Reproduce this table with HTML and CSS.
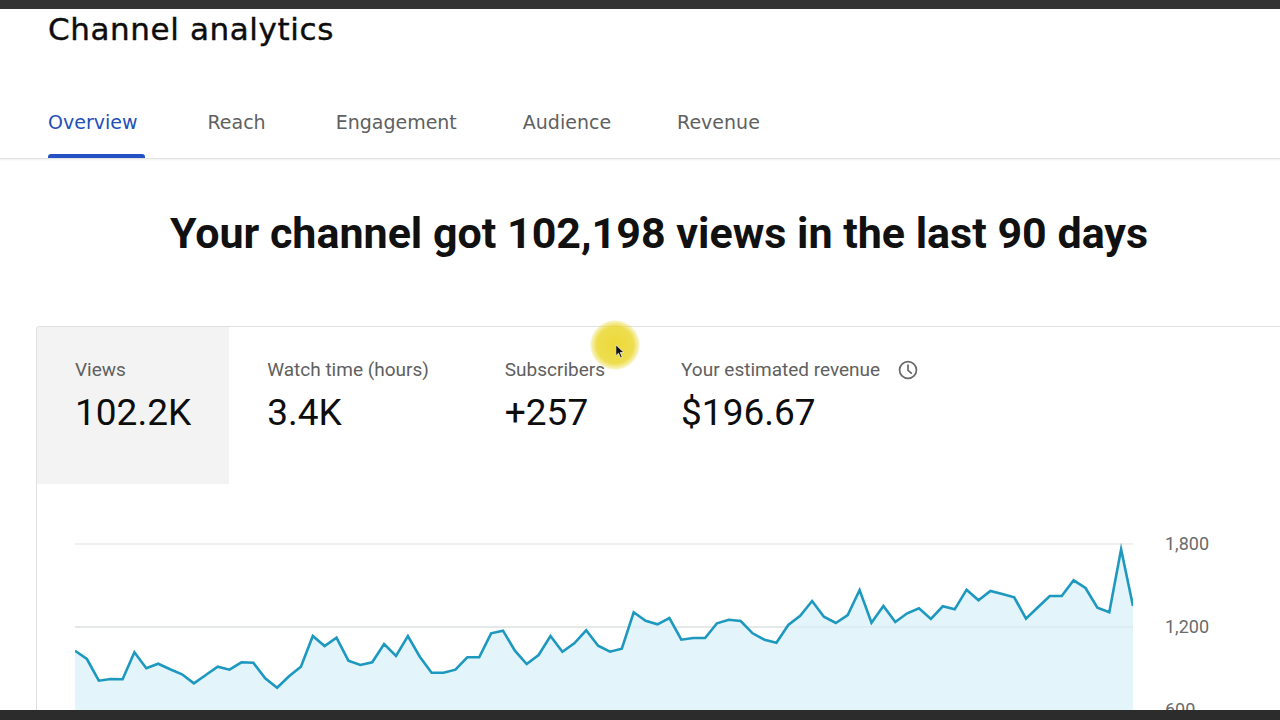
FILE: index.html
```html
<!DOCTYPE html>
<html lang="en">
<head>
<meta charset="utf-8">
<title>Channel analytics</title>
<link rel="stylesheet" href="styles.css">
</head>
<body>
<div class="topbar"></div>
<header class="header">
  <h1 class="title">Channel analytics</h1>
</header>
<nav class="tabs">
  <a class="tab active">Overview</a>
  <a class="tab">Reach</a>
  <a class="tab">Engagement</a>
  <a class="tab tight">Audience</a>
  <a class="tab tight">Revenue</a>
</nav>
<h2 class="headline">Your channel got 102,198 views in the last 90 days</h2>
<section class="card">
  <div class="metrics">
    <div class="metric selected">
      <div class="m-label">Views</div>
      <div class="m-value">102.2K</div>
    </div>
    <div class="metric">
      <div class="m-label">Watch time (hours)</div>
      <div class="m-value">3.4K</div>
    </div>
    <div class="metric">
      <div class="m-label">Subscribers</div>
      <div class="m-value">+257</div>
    </div>
    <div class="metric">
      <div class="m-label">Your estimated revenue
        <svg class="clock" viewBox="0 0 24 24" width="22" height="22" aria-hidden="true">
          <circle cx="12" cy="12" r="9.2" fill="none" stroke="#6a6a6a" stroke-width="1.9"/>
          <path d="M12 6.8V12.4L15.6 15.4" fill="none" stroke="#6a6a6a" stroke-width="1.9" stroke-linecap="round" stroke-linejoin="round"/>
        </svg>
      </div>
      <div class="m-value">$196.67</div>
    </div>
  </div>
  <div class="chart">
    <svg class="plot" width="1058" height="190" viewBox="75 530 1058 190" aria-hidden="true">
      <line x1="75" y1="544" x2="1133" y2="544" stroke="#e2e2e2" stroke-width="1.2"/>
      <line x1="75" y1="627" x2="1133" y2="627" stroke="#dcdcdc" stroke-width="1.2"/>
      <path fill="#e3f4fa" d="M75,720 L75,650.7 86.9,659 98.8,680.7 110.7,679 122.6,679.3 134.4,652.3 146.3,668.3 158.2,663.7 170.1,669.3 182,674.3 193.9,683.3 205.8,675 217.7,666.7 229.5,669.7 241.4,662.3 253.3,662.7 265.2,678.3 277.1,687.7 289,676.3 300.9,666.7 312.8,636 324.6,646 336.5,637.7 348.4,660.7 360.3,665 372.2,662.3 384.1,644 396,656 407.9,636 419.8,656.7 431.6,672.7 443.5,672.7 455.4,669.7 467.3,657.3 479.2,657.3 491.1,633.3 503,630.7 514.9,650.7 526.7,664 538.6,655 550.5,636 562.4,651.7 574.3,643.3 586.2,630.3 598.1,645.7 610,651.7 621.8,648.7 633.7,612.3 645.6,620.7 657.5,624.3 669.4,618 681.3,639.7 693.2,638 705.1,638 717,623.3 728.8,619.7 740.7,621 752.6,633.3 764.5,639.7 776.4,642.7 788.3,625 800.2,615.7 812.1,601 823.9,616.7 835.8,623 847.7,615 859.6,590 871.5,622.7 883.4,606 895.3,622 907.2,613.3 919,608.3 930.9,619 942.8,606.3 954.7,609.3 966.6,589.7 978.5,600.3 990.4,591 1002.3,594 1014.2,597.3 1026,618.7 1037.9,607.3 1049.8,596 1061.7,596 1073.6,580.3 1085.5,588 1097.4,607.7 1109.3,612.3 1121.1,549.3 1133,606 L1133,720 Z"/>
      <line x1="75" y1="627" x2="1133" y2="627" stroke="#d2dde2" stroke-width="1" opacity="0.6"/>
      <polyline fill="none" stroke="#1d98bf" stroke-width="2.6" stroke-linejoin="miter" stroke-miterlimit="6" points="75,650.7 86.9,659 98.8,680.7 110.7,679 122.6,679.3 134.4,652.3 146.3,668.3 158.2,663.7 170.1,669.3 182,674.3 193.9,683.3 205.8,675 217.7,666.7 229.5,669.7 241.4,662.3 253.3,662.7 265.2,678.3 277.1,687.7 289,676.3 300.9,666.7 312.8,636 324.6,646 336.5,637.7 348.4,660.7 360.3,665 372.2,662.3 384.1,644 396,656 407.9,636 419.8,656.7 431.6,672.7 443.5,672.7 455.4,669.7 467.3,657.3 479.2,657.3 491.1,633.3 503,630.7 514.9,650.7 526.7,664 538.6,655 550.5,636 562.4,651.7 574.3,643.3 586.2,630.3 598.1,645.7 610,651.7 621.8,648.7 633.7,612.3 645.6,620.7 657.5,624.3 669.4,618 681.3,639.7 693.2,638 705.1,638 717,623.3 728.8,619.7 740.7,621 752.6,633.3 764.5,639.7 776.4,642.7 788.3,625 800.2,615.7 812.1,601 823.9,616.7 835.8,623 847.7,615 859.6,590 871.5,622.7 883.4,606 895.3,622 907.2,613.3 919,608.3 930.9,619 942.8,606.3 954.7,609.3 966.6,589.7 978.5,600.3 990.4,591 1002.3,594 1014.2,597.3 1026,618.7 1037.9,607.3 1049.8,596 1061.7,596 1073.6,580.3 1085.5,588 1097.4,607.7 1109.3,612.3 1121.1,549.3 1133,606"/>
    </svg>
    <div class="axis">
      <span class="tick">1,800</span>
      <span class="tick">1,200</span>
      <span class="tick">600</span>
    </div>
  </div>
</section>
<div class="highlight"></div>
<svg class="cursor" width="10" height="15" viewBox="0 0 12 18" aria-hidden="true">
  <path d="M1 1 L1 14 L4.2 11 L6.6 16.5 L8.6 15.6 L6.3 10.2 L10.6 10.2 Z" fill="#111" stroke="#fff" stroke-width="0.8" stroke-linejoin="round"/>
</svg>
<div class="bottombar"></div>
</body>
</html>
```

FILE: styles.css
```css
html, body {
  margin: 0;
  padding: 0;
}
body {
  width: 1280px;
  height: 720px;
  overflow: hidden;
  background: #ffffff;
  font-family: Roboto, "Liberation Sans", Arial, sans-serif;
  color: #0f0f0f;
  position: relative;
}
.topbar {
  height: 9px;
  background: #343434;
}
.header {
  padding: 2px 48px 0;
}
.title {
  margin: 0;
  font-family: "DejaVu Sans", "Open Sans", sans-serif;
  font-weight: 400;
  font-size: 31px;
  line-height: 36px;
  letter-spacing: 0.6px;
  -webkit-text-stroke: 0.4px #0d0d0d;
  color: #0d0d0d;
}
.tabs {
  display: flex;
  padding: 0 48px;
  border-bottom: 1px solid #e3e3e3;
  box-shadow: 0 1px 2px rgba(0, 0, 0, 0.06);
}
.tab {
  position: relative;
  padding: 63px 0 24px;
  font-family: "DejaVu Sans", "Open Sans", sans-serif;
  font-size: 19px;
  line-height: 24px;
  color: #606060;
}
.tab + .tab {
  margin-left: 70px;
}
.tab.tight {
  margin-left: 66px;
}
.tab.active {
  color: #2350b8;
}
.tab.active::after {
  content: "";
  position: absolute;
  left: 0;
  right: -8px;
  bottom: 0;
  height: 4px;
  background: #2452c2;
  border-radius: 3px 3px 0 0;
}
.headline {
  margin: 49px 0 0;
  text-align: center;
  font-family: Roboto, sans-serif;
  font-weight: 700;
  font-size: 43px;
  line-height: 50px;
  color: #111111;
  padding-left: 38px;
}
.card {
  margin: 68px -20px 0 36px;
  border-top: 1px solid #e0e0e0;
  border-left: 1px solid #e0e0e0;
  border-top-left-radius: 4px;
  height: 420px;
}
.metrics {
  display: flex;
}
.metric {
  padding: 32px 38px 50px;
}
.metric.selected {
  background: #f3f3f3;
  border-top-left-radius: 3px;
}
.m-label {
  display: flex;
  align-items: center;
  gap: 17px;
  font-size: 19px;
  line-height: 22px;
  color: #606060;
  white-space: nowrap;
}
.clock {
  display: block;
}
.m-value {
  margin-top: 10px;
  font-size: 37px;
  line-height: 43px;
  color: #0d0d0d;
  white-space: nowrap;
}
.chart {
  display: flex;
  padding-left: 38px;
  margin-top: 46px;
}
.plot {
  display: block;
  flex: none;
}
.axis {
  display: flex;
  flex-direction: column;
  gap: 62px;
  margin-left: 32px;
  padding-top: 3px;
}
.tick {
  font-size: 18px;
  line-height: 21px;
  color: #6a6a6a;
}
.highlight {
  position: absolute;
  left: 590px;
  top: 320px;
  width: 50px;
  height: 50px;
  border-radius: 50%;
  background: radial-gradient(circle, rgba(234, 214, 40, 0.92) 0%, rgba(234, 214, 40, 0.82) 52%, rgba(234, 214, 40, 0.35) 66%, rgba(234, 214, 40, 0) 72%);
}
.cursor {
  position: absolute;
  left: 615px;
  top: 344px;
}
.bottombar {
  position: absolute;
  left: 0;
  right: 0;
  bottom: 0;
  height: 10px;
  background: #2c2c2c;
}
```
